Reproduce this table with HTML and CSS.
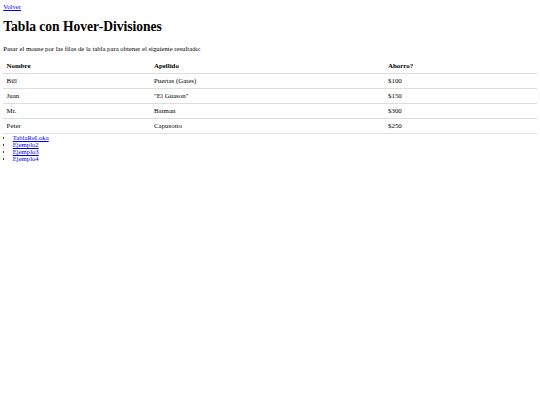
FILE: index.html
```html
<!DOCTYPE html>
<html lang="es">
<head>
<meta charset="utf-8">
<title>Tabla con Hover-Divisiones</title>
<link rel="stylesheet" href="styles.css">
</head>
<body>
<a href="#" class="back">Volver</a>
<h1 class="title">Tabla con Hover-Divisiones</h1>
<p class="intro">Pasar el mouse por las filas de la tabla para obtener el siguiente resultado:</p>
<table class="data">
  <colgroup>
    <col class="c1">
    <col class="c2">
    <col class="c3">
  </colgroup>
  <thead>
    <tr><th>Nombre</th><th>Apellido</th><th>Ahorro?</th></tr>
  </thead>
  <tbody>
    <tr><td>Bill</td><td>Puertas (Gates)</td><td>$100</td></tr>
    <tr><td>Juan</td><td>"El Guason"</td><td>$150</td></tr>
    <tr><td>Mr.</td><td>Batman</td><td>$300</td></tr>
    <tr><td>Peter</td><td>Capusotto</td><td>$250</td></tr>
  </tbody>
</table>
<ul class="links">
  <li><a href="#">TablaReLoka</a></li>
  <li><a href="#">Ejemplo2</a></li>
  <li><a href="#">Ejemplo3</a></li>
  <li><a href="#">Ejemplo4</a></li>
</ul>
</body>
</html>
```

FILE: styles.css
```css
html, body {
  background: #fff;
}
body {
  margin: 3.3px;
  font-family: "Liberation Serif", "Times New Roman", serif;
  font-size: 6.7px;
  color: #000;
}
a {
  color: #0000ee;
  text-decoration: underline;
}
.title {
  font-size: 13.55px;
  font-weight: bold;
  margin: 9.2px 0 9.8px;
}
.intro {
  margin: 0 0 7px;
}
.data {
  width: 100%;
  border-collapse: collapse;
  table-layout: fixed;
  font-size: 6.9px;
}
.c1 { width: 147.4px; }
.c2 { width: 234px; }
.data th,
.data td {
  text-align: left;
  padding: 3px 3.3px;
  line-height: 8px;
  border-top: 1px solid #ddd;
}
.data thead th {
  border-top: 0;
  border-bottom: 1px solid #ddd;
  font-weight: bold;
}
.data tbody tr:first-child td {
  border-top: 0;
}
.data tbody tr:last-child td {
  border-bottom: 1px solid #ddd;
}
.links {
  margin: 0;
  padding-left: 9.4px;
}
```
